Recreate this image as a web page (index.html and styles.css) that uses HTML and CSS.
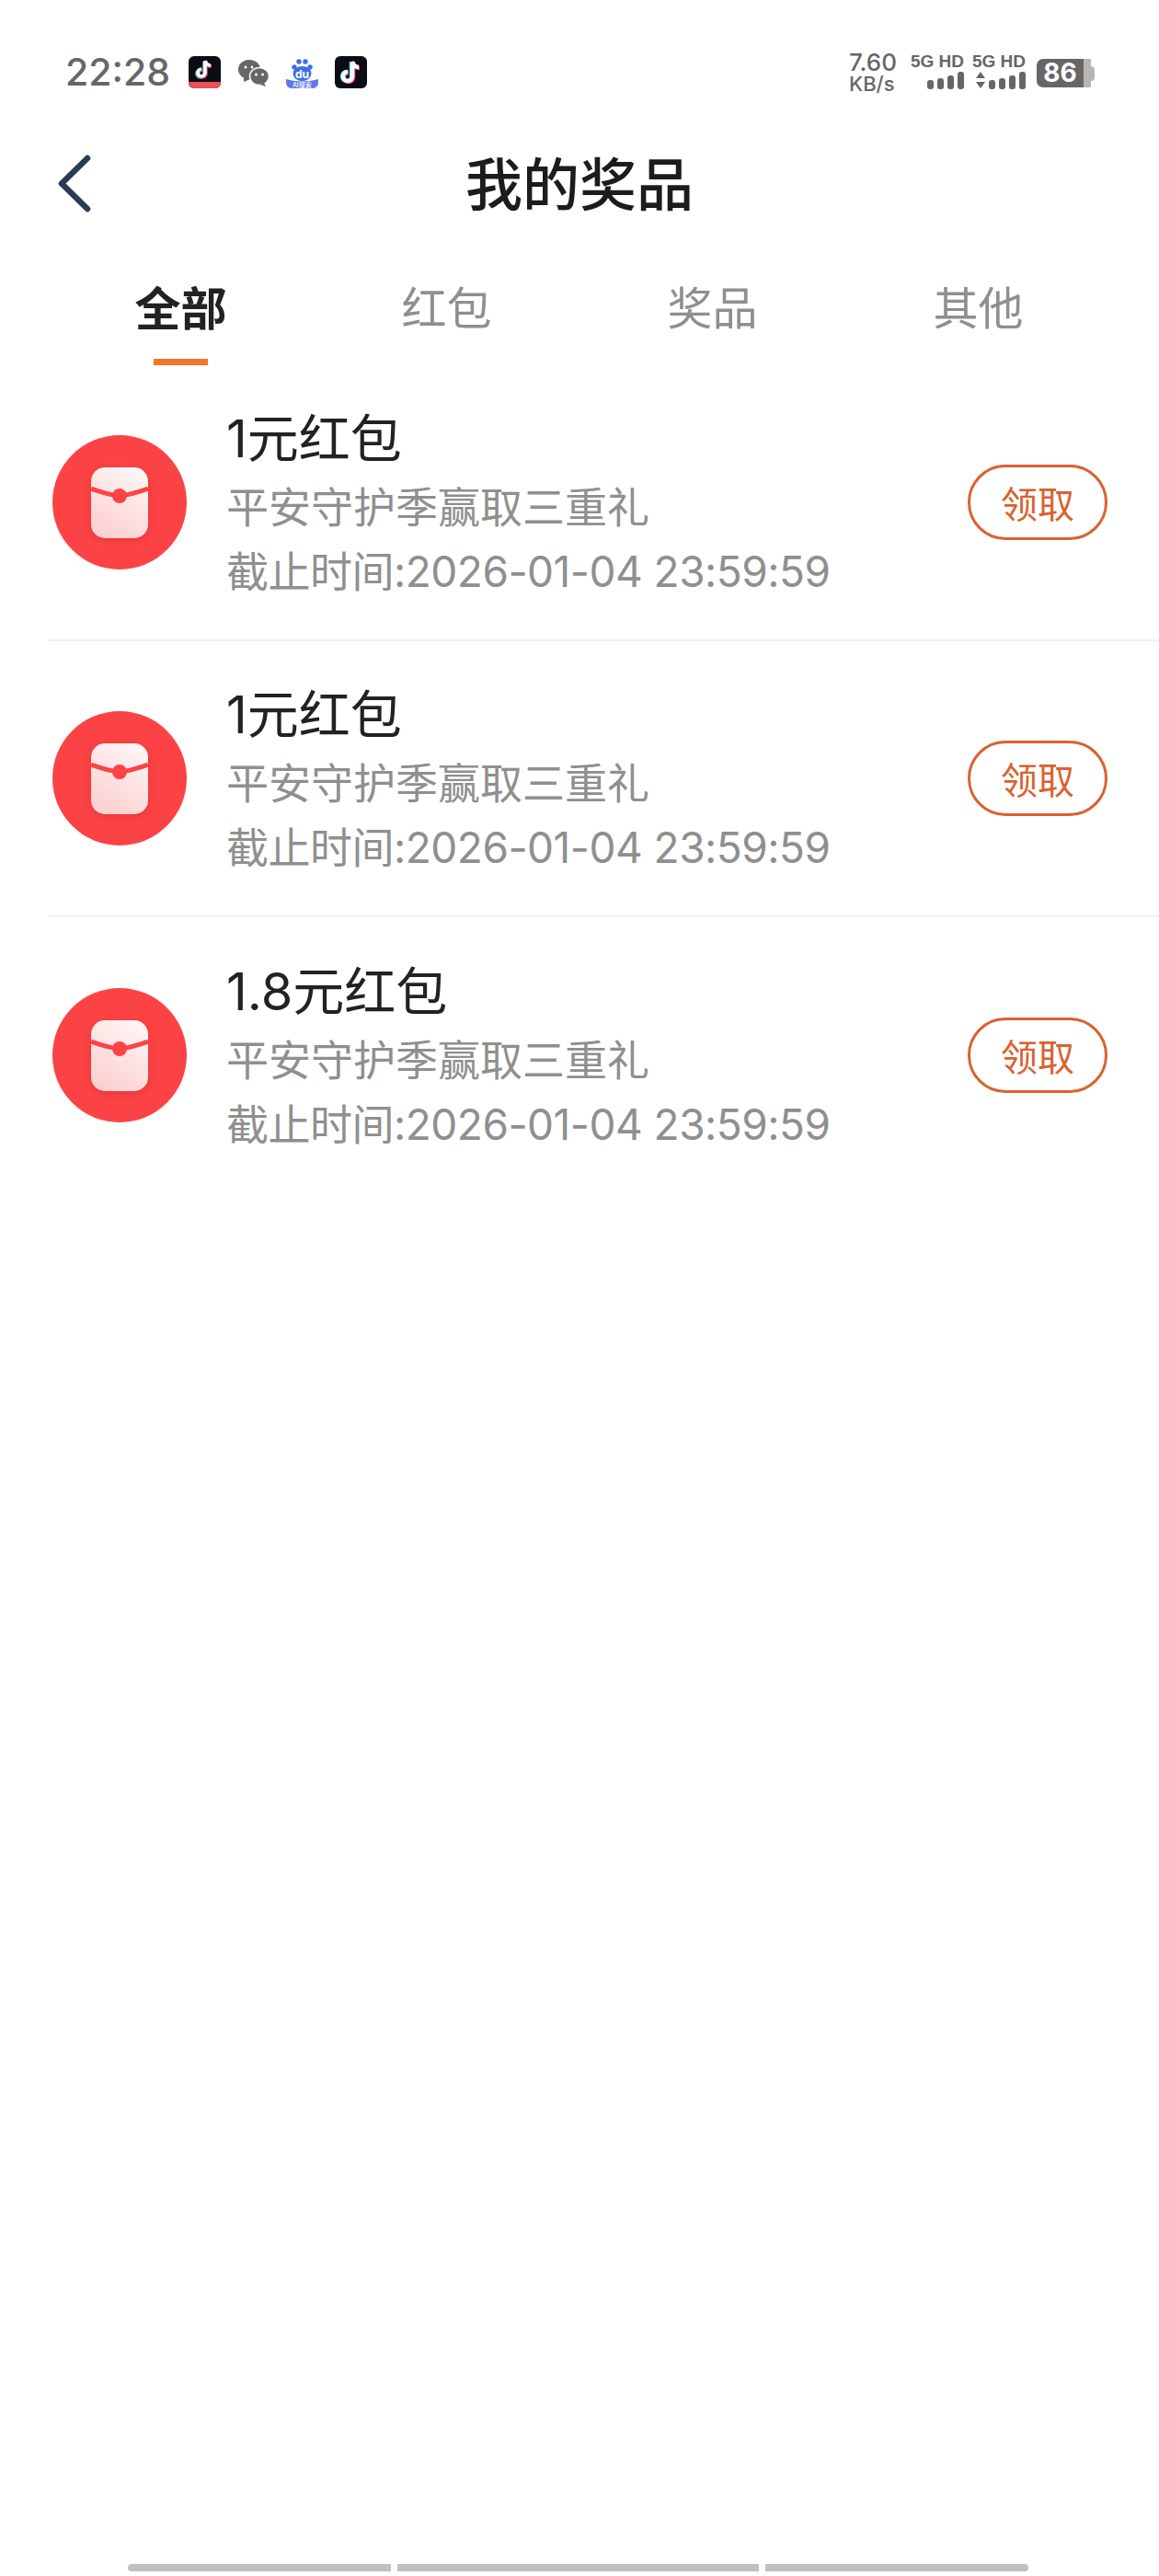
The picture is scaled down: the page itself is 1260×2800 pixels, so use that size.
FILE: index.html
```html
<!DOCTYPE html>
<html lang="zh-CN">
<head>
    <meta charset="UTF-8">
    <meta name="viewport" content="width=device-width, initial-scale=1.0">
    <title>我的奖品</title>
    <link rel="stylesheet" href="styles.css">
</head>
<body>
    <div class="page">
        <div class="status-bar">
            <div class="status-left">
                <span class="time">22:28</span>
                <svg class="app-icon" width="35" height="35" viewBox="0 0 35 35">
                    <rect width="35" height="35" rx="6" fill="#0c0c14"/>
                    <path d="M0 28h35v1a6 6 0 0 1-6 6H6a6 6 0 0 1-6-6z" fill="#e8505a"/>
                    <g fill="none" stroke-width="3.500">
                        <path d="M17 6v13a4 4 0 1 1-4-4M17 6c1 3 3 5 6 5" stroke="#3fe0e0"/>
                        <path d="M19 6v13a4 4 0 1 1-4-4M19 6c1 3 3 5 6 5" stroke="#f0426a"/>
                        <path d="M18 5v13a4 4 0 1 1-4-4M18 5c1 3 3 5 6 5" stroke="#fff"/>
                    </g>
                </svg>
                <svg class="app-icon" width="35" height="35" viewBox="0 0 35 35">
                    <ellipse cx="13" cy="14.500" rx="12" ry="10.500" fill="#666"/>
                    <path d="M7 22l0 6 7-3z" fill="#666"/>
                    <ellipse cx="24" cy="22" rx="10.500" ry="9.500" fill="#666" stroke="#fff" stroke-width="1.500"/>
                    <path d="M29 29l2 4-6-2z" fill="#666"/>
                    <circle cx="9" cy="12" r="1.500" fill="#fff"/>
                    <circle cx="16" cy="12" r="1.500" fill="#fff"/>
                    <circle cx="20.500" cy="20" r="1.500" fill="#fff"/>
                    <circle cx="27.500" cy="20" r="1.500" fill="#fff"/>
                </svg>
                <svg class="app-icon" width="35" height="35" viewBox="0 0 35 35">
                    <circle cx="9" cy="12" r="2.700" fill="#3f6fe0"/>
                    <circle cx="14" cy="6" r="2.700" fill="#3f6fe0"/>
                    <circle cx="21" cy="6" r="2.700" fill="#3f6fe0"/>
                    <circle cx="26" cy="12" r="2.700" fill="#3f6fe0"/>
                    <ellipse cx="17.500" cy="19" rx="10" ry="8" fill="#3f6fe0"/>
                    <text class="du" x="17.500" y="24" text-anchor="middle">du</text>
                    <path d="M0 25q17.500 5 35 0v4a6 6 0 0 1-6 6H6a6 6 0 0 1-6-6z" fill="#5d78e8"/>
                    <text class="ai-label" x="17.500" y="33.500" text-anchor="middle">AI搜索</text>
                </svg>
                <svg class="app-icon" width="35" height="35" viewBox="0 0 35 35">
                    <rect width="35" height="35" rx="6" fill="#0c0c14"/>
                    <g fill="none" stroke-width="4.500">
                        <path d="M18 6v16a5 5 0 1 1-5-5M18 6c1 4 4 6 7 6" stroke="#3fe0e0"/>
                        <path d="M20 7v16a5 5 0 1 1-5-5M20 7c1 4 4 6 7 6" stroke="#f0426a"/>
                        <path d="M19 6v16a5 5 0 1 1-5-5M19 6c1 4 4 6 7 6" stroke="#fff"/>
                    </g>
                </svg>
            </div>
            <div class="status-right">
                <div class="net-speed"><span>7.60</span><span class="net-unit">KB/s</span></div>
                <div class="sim">
                    <span class="sim-label">5G HD</span>
                    <div class="bars">
                        <i class="bar b1"></i><i class="bar b2"></i><i class="bar b3"></i><i class="bar b4"></i>
                    </div>
                </div>
                <div class="sim">
                    <span class="sim-label">5G HD</span>
                    <div class="bars">
                        <svg class="arrows" width="10" height="18" viewBox="0 0 10 18"><path d="M5 0l5 7H0zM5 18l5-7H0z" fill="#666"/></svg>
                        <i class="bar b1"></i><i class="bar b2"></i><i class="bar b3"></i><i class="bar b4"></i>
                    </div>
                </div>
                <div class="battery"><span class="battery-level">86</span><span class="battery-rest"></span><span class="battery-tip"></span></div>
            </div>
        </div>

        <div class="nav-bar">
            <svg class="back" width="38" height="64" viewBox="0 0 38 64">
                <path d="M33 4L5 31.500 33 59" fill="none" stroke="#2b3b55" stroke-width="6.500" stroke-linecap="round" stroke-linejoin="round"/>
            </svg>
            <h1>我的奖品</h1>
        </div>

        <div class="tabs">
            <div class="tab active">全部</div>
            <div class="tab">红包</div>
            <div class="tab">奖品</div>
            <div class="tab">其他</div>
        </div>

        <div class="list">
            <div class="item">
                <div class="packet">
                    <svg width="62" height="77" viewBox="0 0 62 77">
                        <defs>
                            <linearGradient id="env" x1="0.800" y1="0" x2="0.300" y2="1">
                                <stop offset="0" stop-color="#fff6f6"/>
                                <stop offset="1" stop-color="#fcd0d0"/>
                            </linearGradient>
                        </defs>
                        <rect width="62" height="77" rx="15" fill="url(#env)"/>
                        <path d="M0 23q16 6 31 8q15-2 31-8" fill="none" stroke="#fb4345" stroke-width="5"/>
                        <circle cx="31" cy="31" r="8" fill="#fb4345"/>
                    </svg>
                </div>
                <div class="info">
                    <div class="name">1元红包</div>
                    <div class="desc">平安守护季赢取三重礼</div>
                    <div class="desc date">截止时间:2026-01-04 23:59:59</div>
                </div>
                <button class="claim">领取</button>
            </div>
            <div class="item">
                <div class="packet">
                    <svg width="62" height="77" viewBox="0 0 62 77">
                        <rect width="62" height="77" rx="15" fill="url(#env)"/>
                        <path d="M0 23q16 6 31 8q15-2 31-8" fill="none" stroke="#fb4345" stroke-width="5"/>
                        <circle cx="31" cy="31" r="8" fill="#fb4345"/>
                    </svg>
                </div>
                <div class="info">
                    <div class="name">1元红包</div>
                    <div class="desc">平安守护季赢取三重礼</div>
                    <div class="desc date">截止时间:2026-01-04 23:59:59</div>
                </div>
                <button class="claim">领取</button>
            </div>
            <div class="item">
                <div class="packet">
                    <svg width="62" height="77" viewBox="0 0 62 77">
                        <rect width="62" height="77" rx="15" fill="url(#env)"/>
                        <path d="M0 23q16 6 31 8q15-2 31-8" fill="none" stroke="#fb4345" stroke-width="5"/>
                        <circle cx="31" cy="31" r="8" fill="#fb4345"/>
                    </svg>
                </div>
                <div class="info">
                    <div class="name">1.8元红包</div>
                    <div class="desc">平安守护季赢取三重礼</div>
                    <div class="desc date">截止时间:2026-01-04 23:59:59</div>
                </div>
                <button class="claim">领取</button>
            </div>
        </div>

        <div class="home-bar">
            <i class="seg seg-left"></i>
            <i class="seg seg-mid"></i>
            <i class="seg seg-right"></i>
        </div>
    </div>
</body>
</html>
```

FILE: styles.css
```css
* { box-sizing: border-box; }
html, body { margin: 0; padding: 0; }
body { background: #fff; font-family: Inter, "Noto Sans CJK SC", sans-serif; }
.page { width: 1260px; height: 2800px; display: flex; flex-direction: column; }

.status-bar { height: 160px; padding: 48px 70px 0 71px; display: flex; justify-content: space-between; align-items: flex-start; color: #666; }
.status-left { display: flex; align-items: center; height: 60px; }
.time { font-size: 41px; line-height: 60px; width: 134px; font-weight: 500; }
.app-icon { margin-right: 18px; }
.status-right { display: flex; align-items: flex-start; padding-top: 8px; }
.net-speed { display: flex; flex-direction: column; width: 69px; font-size: 26px; line-height: 24px; font-weight: 500; }
.net-unit { font-size: 22px; line-height: 22px; }
.sim { width: 67px; padding-right: 11px; display: flex; flex-direction: column; align-items: flex-end; }
.sim-label { font-size: 19px; line-height: 21px; font-weight: 700; font-family: "Liberation Sans", sans-serif; white-space: nowrap; }
.bars { display: flex; align-items: flex-end; gap: 4px; height: 20px; }
.bar { display: block; width: 7px; background: #666; border-radius: 3px; }
.b1 { height: 10px; }
.b2 { height: 12px; }
.b3 { height: 15px; }
.b4 { height: 19px; }
.arrows { margin-bottom: 1px; }
.battery { display: flex; align-items: center; width: 63px; height: 31px; margin-left: 1px; margin-top: 8px; }
.battery-level { width: 51px; height: 31px; background: #666; color: #fff; font-size: 28px; line-height: 31px; font-weight: 700; text-align: center; border-radius: 7px 0 0 7px; }
.battery-rest { width: 8px; height: 31px; background: #b5b5b5; }
.battery-tip { width: 4px; height: 16px; background: #b5b5b5; border-radius: 0 4px 4px 0; }

.nav-bar { height: 84px; position: relative; text-align: center; }
.nav-bar h1 { margin: 0; font-size: 62px; line-height: 84px; font-weight: 500; color: #1c1c1e; }
.back { position: absolute; left: 62px; top: 8px; }

.tabs { display: flex; padding-left: 52px; margin-top: 59px; height: 94px; }
.tab { width: 289px; text-align: center; font-size: 49px; line-height: 66px; color: #8f8f8f; }
.tab.active { color: #222; font-size: 50px; font-weight: 700; position: relative; }
.tab.active::after { content: ""; position: absolute; left: 115px; bottom: 0; width: 59px; height: 7px; background: #f5762a; }

.list { padding-left: 52px; }
.item { height: 300px; display: flex; align-items: center; border-bottom: 2px solid #f0f0f0; padding: 0 56px 0 5px; }
.item:last-child { border-bottom: 0; }
.packet { width: 146px; height: 146px; border-radius: 50%; background: #fb4345; display: flex; align-items: center; justify-content: center; flex-shrink: 0; }
.packet svg { filter: drop-shadow(0 2px 4px rgba(190, 30, 30, .35)); }
.info { flex: 1; margin-left: 43px; }
.name { font-size: 56px; line-height: 80px; color: #222; }
.desc { font-size: 46px; line-height: 68px; color: #8f8f8f; }
.date { letter-spacing: -.5px; padding-top: 2px; }
.claim { width: 152px; height: 82px; border: 3px solid #d9622f; border-radius: 41px; background: #fff; color: #d9622f; font: inherit; font-size: 40px; padding: 0; }

.home-bar { margin-top: auto; display: flex; gap: 7px; padding: 0 0 5px 139px; }
.seg { display: block; height: 8px; background: #c0c0c0; }
.seg-left { width: 286px; border-radius: 4px 0 0 4px; }
.seg-mid { width: 393px; }
.seg-right { width: 286px; border-radius: 0 4px 4px 0; }

.du { font: 700 12px Inter, sans-serif; fill: #fff; }
.ai-label { font: 500 7px "Noto Sans CJK SC", sans-serif; fill: #fff; }
```
